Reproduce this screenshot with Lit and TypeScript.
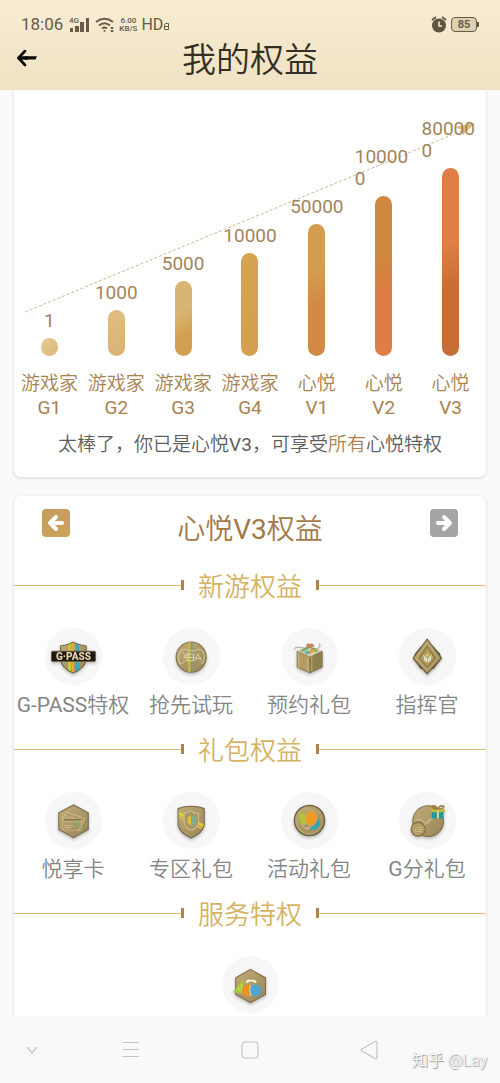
import { LitElement, html, svg, css } from "lit";
import { customElement } from "lit/decorators.js";
import { styleMap } from "lit/directives/style-map.js";

interface Level {
  value: string;
  name: string;
  tier: string;
  height: number;
  fill: string;
}

const LEVELS: Level[] = [
  { value: "1", name: "游戏家", tier: "G1", height: 18, fill: "linear-gradient(135deg, #e8cb95, #d9b877)" },
  { value: "1000", name: "游戏家", tier: "G2", height: 46, fill: "linear-gradient(160deg, #e0bd82, #d9b373)" },
  { value: "5000", name: "游戏家", tier: "G3", height: 75, fill: "linear-gradient(150deg, #d9b574 40%, #d2a050 70%)" },
  { value: "10000", name: "游戏家", tier: "G4", height: 103, fill: "linear-gradient(170deg, #d5a352, #d3a04e)" },
  { value: "50000", name: "心悦", tier: "V1", height: 132, fill: "linear-gradient(165deg, #d39e4f 35%, #d28a45 60%)" },
  { value: "100000", name: "心悦", tier: "V2", height: 160, fill: "linear-gradient(175deg, #d0873f 40%, #de7d45 60%)" },
  { value: "800000", name: "心悦", tier: "V3", height: 188, fill: "linear-gradient(165deg, #de7f48 40%, #c96d36 62%)" },
];

const HEX = "M85 38 129 62V112L85 136 41 112V62Z";

const ICONS: Record<string, unknown> = {
  gpass: svg`
    <clipPath id="gp"><path d="M46 54Q68 51 84 42Q102 51 123 54V92Q120 120 84 134Q49 120 46 92Z"/></clipPath>
    <g clip-path="url(#gp)">
      <path d="M40 38H130V138H40Z" fill="url(#gold)"/>
      <path d="M69 38H78V138H69Z" fill="#c5ca3b"/><path d="M80 38H87V138H80Z" fill="#e9a72c"/>
      <path d="M91 38H101V138H91Z" fill="#35acbd"/>
    </g>
    <path d="M46 54Q68 51 84 42Q102 51 123 54V92Q120 120 84 134Q49 120 46 92Z" fill="none" stroke="#726541" stroke-width="3"/>
    <rect x="19" y="69" width="132" height="31" rx="4" fill="#1c1812" stroke="#77673f" stroke-width="2"/>
    <text x="85" y="95" text-anchor="middle" font-size="30" font-weight="900" font-family="Roboto, sans-serif" fill="#e4cfaa">G·PASS</text>`,
  trial: svg`
    <circle cx="84" cy="87" r="45" fill="url(#gold)" stroke="#7f704c" stroke-width="3"/>
    <path d="M75 43H82V131H75Z" fill="#c9b93c"/><path d="M83 43H88V131H83Z" fill="#6f9d94"/>
    <path d="M51 70Q65 58 80 68H94Q108 58 120 70M51 70Q42 90 51 108L66 100M120 70Q127 92 119 106L107 99" fill="none" stroke="#e8dcba" stroke-width="2"/>
    <path d="M59 72 73 94M74 73 61 93M74 78H91V98H71ZM76 88H92M95 98 104 77 116 98M98 91H113" fill="none" stroke="#f5edd4" stroke-width="2"/>`,
  booking: svg`
    <path d="M48 69 86 87V134L48 117Z" fill="#b39c63"/><path d="M86 87 123 69V117L86 134Z" fill="#91804f"/>
    <path d="M48 69 86 52 123 69 86 87Z" fill="#d8cfa5"/>
    <path d="M58 66 78 57 85 60 65 71ZM96 60 111 67 103 72 89 64Z" fill="#5fb36b"/>
    <path d="M74 74 98 63 105 66 82 79Z" fill="#e8a23c"/><path d="M68 72 80 67 88 73 78 79Z" fill="#53b3b5"/>
    <path d="M48 69 86 87 123 69V117L86 134 48 117ZM86 87V134" fill="none" stroke="#756641" stroke-width="2"/>
    <path d="M53 73V118M80 86V130M92 86V129" stroke="#d6c48c" stroke-width="2"/>
    <path d="M41 64Q39 55 56 58Q70 62 85 58Q105 66 114 58Q118 54 115 45" fill="none" stroke="#9b805c" stroke-width="2"/>
    <path d="M76 54Q78 43 87 49Q95 44 98 54L87 59Z" fill="#d8855a" stroke="#9b805c" stroke-width="2"/>`,
  commander: svg`
    <path d="M65 55H103L122 76 127 91 103 122H65L42 91 48 76Z" fill="#554a30"/>
    <path d="M84 33 127 90 84 137 42 90Z" fill="url(#gold)" stroke="#6b5d38" stroke-width="3"/>
    <path d="M84 45 116 90 84 126 53 90Z" fill="#a08b52" stroke="#dccb98" stroke-width="2"/>
    <path d="M84 57 107 90 84 116 62 90Z" fill="#b09b62" stroke="#7d6c41" stroke-width="2"/>
    <path d="M72 78 84 90V104L75 97ZM98 78 86 90V104L95 97Z" fill="#d9e1c4"/><path d="M85 73 90 81 85 88 80 81Z" fill="#e8c367"/>`,
  card: svg`
    <path d=${HEX} fill="url(#gold)" stroke="#74684a" stroke-width="3"/>
    <path d="M54 78 64 59 118 79 112 95 99 117" fill="none" stroke="#d9cda2" stroke-width="2"/>
    <path d="M60 70 111 88M52 80H109V114H53ZM53 88H109" fill="none" stroke="#cdb986" stroke-width="2"/>
    <path d="M57 83H108" stroke="#6e6037" stroke-width="3"/>
    <path d="M89 84 97 99 111 108M97 84 107 100" fill="none" stroke="#8bb270" stroke-width="4"/>
    <path d="M58 100H84M58 106H77" stroke="#d9c793" stroke-width="2"/>`,
  zone: svg`
    <clipPath id="zn"><path d="M45 49Q84 36 123 49V98Q119 122 84 137Q49 122 45 98Z"/></clipPath>
    <g clip-path="url(#zn)">
      <path d="M40 38H130V140H40Z" fill="url(#gold)"/>
      <path d="M40 55 130 101V111L40 65Z" fill="#ddd032"/><path d="M40 68 130 114V119L40 73Z" fill="#e2c33a"/>
    </g>
    <path d="M45 49Q84 36 123 49V98Q119 122 84 137Q49 122 45 98Z" fill="none" stroke="#6f6445" stroke-width="3"/>
    <path d="M84 56Q93 64 106 63V91Q103 108 84 115Q66 108 63 91V63Q76 63 84 56Z" fill="#a99765" stroke="#cfc294" stroke-width="3"/>
    <path d="M84 71 73 76V91L83 100Z" fill="#e9bd36"/><path d="M87 71 97 76V91L87 100Z" fill="#70b6a3"/>`,
  event: svg`
    <circle cx="85" cy="85" r="45" fill="url(#gold)" stroke="#6f6242" stroke-width="4"/>
    <circle cx="84" cy="87" r="38" fill="none" stroke="#c3b17e" stroke-width="2"/>
    <path d="M64 96Q70 114 84 108M89 98 82 110M95 106 81 111" fill="none" stroke="#e5d8af" stroke-width="2"/>
    <ellipse cx="65" cy="80" rx="11" ry="18" fill="#b2c43d" transform="rotate(-12 65 80)"/>
    <path d="M111 80Q122 91 113 105Q98 117 83 110Q103 101 111 80Z" fill="#31a7b5"/>
    <ellipse cx="90" cy="78" rx="17" ry="21" fill="#ee9826" stroke="#d9b35c" stroke-width="2"/>`,
  points: svg`
    <circle cx="87" cy="87" r="46" fill="url(#gold)" stroke="#81724b" stroke-width="3"/>
    <path d="M73 99Q86 83 102 80M76 94 88 91 92 79M53 82Q67 79 77 91" fill="none" stroke="#d8cda5" stroke-width="2"/>
    <circle cx="57" cy="111" r="21" fill="#ab9660" stroke="#79683e" stroke-width="3"/>
    <circle cx="57" cy="111" r="15" fill="none" stroke="#cbb272" stroke-width="2"/>
    <path d="M48 105H66V118H49V110M52 112H65" fill="none" stroke="#dfcd97" stroke-width="2"/>
    <path d="M98 59H133V79H98Z" fill="#1f99a5"/><path d="M95 51H137V60H95Z" fill="#b8bd3c"/>
    <path d="M113 50H119V79H113Z" fill="#e6d58b"/>
    <path d="M115 51Q99 51 99 42Q109 38 115 51Q123 37 134 43Q132 51 115 51Z" fill="none" stroke="#a1793b" stroke-width="4"/>`,
  service: svg`
    <path d="M85 40 130 65V115L85 139 41 115V65Z" fill="url(#gold)" stroke="#796b48" stroke-width="3"/>
    <path d="M63 69 68 111 32 108Z" fill="#a9c63c"/><path d="M57 85 60 106M50 92 51 105" stroke="#e0e299" stroke-width="2"/>
    <path d="M71 80Q70 73 78 71H94Q104 73 103 80H96L93 76H81L78 80Z" fill="#fff8df"/>
    <circle cx="77" cy="103" r="18" fill="#e99223"/><circle cx="99" cy="103" r="18" fill="#51a4cf"/>
    <path d="M86 86Q79 102 87 120" fill="none" stroke="#e6d8a0" stroke-width="3"/>`,
};

const SECTIONS = [
  {
    title: "新游权益",
    items: [
      { icon: "gpass", latin: "G-PASS", label: "特权" },
      { icon: "trial", latin: "", label: "抢先试玩" },
      { icon: "booking", latin: "", label: "预约礼包" },
      { icon: "commander", latin: "", label: "指挥官" },
    ],
  },
  {
    title: "礼包权益",
    items: [
      { icon: "card", latin: "", label: "悦享卡" },
      { icon: "zone", latin: "", label: "专区礼包" },
      { icon: "event", latin: "", label: "活动礼包" },
      { icon: "points", latin: "G", label: "分礼包" },
    ],
  },
  { title: "服务特权", items: [{ icon: "service", latin: "", label: "" }] },
];

@customElement("status-bar")
class StatusBar extends LitElement {
  static styles = css`
    :host { display: flex; align-items: center; height: 17px; color: #665c47; font-size: 17px; line-height: 17px; }
    svg { display: block; }
    .signal { margin-left: 6px; }
    .wifi { margin-left: 5px; }
    .speed { margin-left: 5px; font-size: 8px; line-height: 8px; font-weight: 500; text-align: center; }
    .speed div { white-space: nowrap; }
    .hd { margin-left: 4px; font-size: 16px; }
    .sim { margin: 4px 0 0 1px; }
    .alarm { margin-left: auto; }
    .battery { display: flex; align-items: center; margin-left: 4px; }
    .level { box-sizing: border-box; width: 26px; height: 15px; border: 1px solid #665c47; border-radius: 4px; background: #ddd1b3; font-size: 11px; line-height: 13px; font-weight: 700; text-align: center; }
    .cap { width: 2px; height: 5px; background: #665c47; }
  `;
  render() {
    return html`
      <span>18:06</span>
      <svg class="signal" width="21" height="16" viewBox="0 0 21 16" fill="#665c47">
        <path d="M1 11h3v4H1zM6 9h4v6H6zM11 5h4v10h-4zM17 1h3v14h-3z"/>
        <text x="0" y="6" font-size="8" font-weight="500">4G</text>
      </svg>
      <svg class="wifi" width="19" height="16" viewBox="0 0 19 16" fill="none" stroke="#665c47" stroke-width="2">
        <path d="M1 5Q9.500-1.500 18 5M4 8.500Q9.500 4 15 8.500M7 11.500Q9.500 9.500 12 11.500"/>
        <circle cx="9.500" cy="14" r="1" fill="#665c47" stroke="none"/><path d="M17 10v2M17 13v2" stroke-width="2.500"/>
      </svg>
      <div class="speed"><div>6.00</div><div>KB/S</div></div>
      <span class="hd">HD</span>
      <svg class="sim" width="5" height="7" viewBox="0 0 5 7" fill="none" stroke="#665c47"><path d="M1.500.5h3v6h-4v-5zM1 3.500h3"/></svg>
      <svg class="alarm" width="16" height="17" viewBox="0 0 16 17">
        <circle cx="8" cy="9.500" r="7" fill="#5f5642"/><path d="M1 4 5 1M15 4 11 1" stroke="#5f5642" stroke-width="1.800"/>
        <path d="M8 5.500V10h3" fill="none" stroke="#f4e8cc" stroke-width="1.600"/>
      </svg>
      <div class="battery"><div class="level">85</div><div class="cap"></div></div>
    `;
  }
}

@customElement("growth-chart")
class GrowthChart extends LitElement {
  static styles = css`
    :host { display: block; position: relative; padding: 28px 2px 0; }
    .trend { position: absolute; left: 0; top: 0; width: 100%; height: 230px; }
    .columns { display: grid; grid-template-columns: repeat(7, 1fr); align-items: end; color: #a8824f; font-size: 19px; position: relative; }
    .column { display: flex; flex-direction: column; align-items: center; }
    .value { max-width: 58px; line-height: 22px; word-break: break-all; color: #a2845b; }
    .bar { width: 17px; margin-top: 6px; border-radius: 9px; }
    .name { margin-top: 16px; line-height: 24px; text-align: center; }
    .name span { display: block; white-space: nowrap; }
    .game { font-weight: 350; }
  `;
  render() {
    return html`
      <svg class="trend" viewBox="0 0 472 230" preserveAspectRatio="none" aria-hidden="true">
        <path d="M11 222 450 40" stroke="#cdb78f" stroke-dasharray="3 2" fill="none"/>
        <path d="M441 37 461 33 449 45 448 40Z" fill="#e0b96e"/>
      </svg>
      <div class="columns">
        ${LEVELS.map(
          (l) => html`<div class="column">
            <div class="value">${l.value}</div>
            <div class="bar" style=${styleMap({ height: `${l.height}px`, background: l.fill })}></div>
            <div class="name"><span class="game">${l.name}</span><span>${l.tier}</span></div>
          </div>`
        )}
      </div>
    `;
  }
}

@customElement("benefit-section")
class BenefitSection extends LitElement {
  static properties = { heading: {}, items: { attribute: false } };
  declare heading: string;
  declare items: { icon: string; latin: string; label: string }[];
  static styles = css`
    :host { display: block; padding-bottom: 8px; }
    .head { display: flex; align-items: center; height: 42px; }
    .rule { flex: 1; height: 1px; background: #e0bd70; }
    .tick { width: 3px; height: 10px; background: #ac8250; }
    h3 { margin: 0 14px; padding-top: 4px; color: #d6b263; font-size: 26px; line-height: 38px; font-weight: 350; }
    .items { display: flex; justify-content: center; margin-top: 22px; }
    .item { width: 25%; display: flex; flex-direction: column; align-items: center; text-decoration: none; color: #858585; font-size: 21px; line-height: 30px; font-weight: 350; white-space: nowrap; }
    .latin { font-weight: 400; }
    .disc { width: 57px; height: 57px; margin-bottom: 5px; border-radius: 50%; background: #f7f7f7; }
    .disc svg { display: block; width: 57px; height: 57px; }
    .art { filter: drop-shadow(0 5px 4px #00000040); }
  `;
  render() {
    return html`
      <div class="head">
        <div class="rule"></div><div class="tick"></div>
        <h3>${this.heading}</h3>
        <div class="tick"></div><div class="rule"></div>
      </div>
      <div class="items">
        ${this.items.map(
          (i) => html`<a class="item" href="#">
            <span class="disc"><svg viewBox="0 0 170 170" aria-hidden="true">
              <defs><linearGradient id="gold" x1="0" y1="0" x2="1" y2="1"><stop stop-color="#c2ad78"/><stop offset="1" stop-color="#988356"/></linearGradient></defs>
              <g class="art">${ICONS[i.icon]}</g>
            </svg></span>
            <span><span class="latin">${i.latin}</span>${i.label}</span>
          </a>`
        )}
      </div>
    `;
  }
}

@customElement("app-root")
class AppRoot extends LitElement {
  static styles = css`
    :host { display: flex; flex-direction: column; height: 100vh; overflow: hidden; background: #fafafa; font-family: Roboto, "Noto Sans CJK SC", sans-serif; font-weight: 350; }
    button { padding: 0; border: 0; background: none; display: grid; place-items: center; }
    svg { display: block; }
    header { box-sizing: border-box; height: 90px; flex: none; padding: 16px 21px 0 17px; background: linear-gradient(#f8ecd3, #efe2c3); }
    status-bar { padding-left: 4px; font-weight: 400; }
    .titlebar { display: grid; grid-template-columns: 22px 1fr 22px; align-items: center; height: 50px; }
    h1 { margin: 2px 0 0 4px; text-align: center; font-size: 34px; line-height: 50px; font-weight: 350; color: #352e25; }
    main { flex: 1; min-height: 0; overflow: hidden; padding: 0 13px; }
    .card { border: 1px solid #ececec; background: #fff; border-radius: 8px; box-shadow: 0 1px 2px #0000001a; }
    .levels { border-top: 0; border-radius: 0 0 8px 8px; font-weight: 400; }
    .tip { margin: 0; padding: 10px 0 17px; text-align: center; font-size: 19px; line-height: 30px; font-weight: 350; color: #5e5e5e; }
    .tip em { font-style: normal; color: #ad8450; }
    .latin { font-weight: 400; }
    .benefits { margin-top: 17px; border-top-color: #f4f4f4; }
    .switcher { display: flex; justify-content: space-between; align-items: flex-start; height: 68px; padding: 0 28px; }
    .switcher button { width: 28px; height: 28px; margin-top: 13px; border-radius: 4px; background: linear-gradient(160deg, #c49c5e, #cba35c); }
    .switcher .next { background: #a5a5a5; }
    h2 { margin: 0; font-size: 28px; line-height: 68px; font-weight: 350; color: #a37a48; }
    nav { flex: none; display: grid; grid-template-columns: 72px 1fr 1fr 1fr 72px; height: 67px; background: #f9f9f9; position: relative; }
    .hide { padding-right: 8px; }
    .mark { position: absolute; right: 13px; bottom: 12px; font-size: 16px; line-height: 20px; color: #fff; text-shadow: 1px 1px 1px #999, 0 0 1px #aaa; }
  `;
  render() {
    return html`
      <header>
        <status-bar></status-bar>
        <div class="titlebar">
          <button aria-label="返回">
            <svg width="22" height="18" viewBox="0 0 22 18" fill="none" stroke="#0c0a06" stroke-linecap="round" stroke-linejoin="round">
              <path d="M8 1 1.500 8 8 15" stroke-width="2.600"/><path d="M2 8H10" stroke-width="3.400"/><path d="M8 6.300H20L18.500 9.400H8Z" fill="#0c0a06" stroke="none"/>
            </svg>
          </button>
          <h1>我的权益</h1>
        </div>
      </header>
      <main>
        <section class="card levels">
          <growth-chart></growth-chart>
          <p class="tip">太棒了，你已是心悦<span class="latin">V3</span>，可享受<em>所有</em>心悦特权</p>
        </section>
        <section class="card benefits">
          <div class="switcher">
            <button aria-label="上一级">${this.arrow(false)}</button>
            <h2>心悦<span class="latin">V3</span>权益</h2>
            <button class="next" aria-label="下一级">${this.arrow(true)}</button>
          </div>
          ${SECTIONS.map((s) => html`<benefit-section .heading=${s.title} .items=${s.items}></benefit-section>`)}
        </section>
      </main>
      <nav>
        <button class="hide" aria-label="收起"><svg width="12" height="8" viewBox="0 0 12 8" fill="none" stroke="#c4c4c4" stroke-width="1.300"><path d="M1 1 6 7 11 1"/></svg></button>
        <button aria-label="菜单"><svg width="18" height="16" viewBox="0 0 18 16" stroke="#c4c4c4"><path d="M1 .5H17M1 7.500H17M1 14.500H17"/></svg></button>
        <button aria-label="主页"><svg width="18" height="18" viewBox="0 0 18 18" fill="none" stroke="#c4c4c4" stroke-width="1.200"><rect x="1" y="1" width="16" height="16" rx="3"/></svg></button>
        <button aria-label="后退"><svg width="18" height="20" viewBox="0 0 18 20" fill="none" stroke="#c4c4c4" stroke-width="1.200" stroke-linejoin="round"><path d="M15.500 1.300 1.500 9.200Q.8 10 1.500 10.800L15.500 18.700Q17 19 17 17.500V2.500Q17 1 15.500 1.300Z"/></svg></button>
        <span class="mark">知乎 @Lay</span>
      </nav>
    `;
  }
  private arrow(right: boolean) {
    return html`<svg width="18" height="18" viewBox="0 0 18 18" fill="none" stroke="#fff" stroke-width="4" stroke-linecap="round" stroke-linejoin="round">
      ${right ? svg`<path d="M9 3 15 9 9 15M14 9H3"/>` : svg`<path d="M9 3 3 9 9 15M4 9H15"/>`}
    </svg>`;
  }
}
